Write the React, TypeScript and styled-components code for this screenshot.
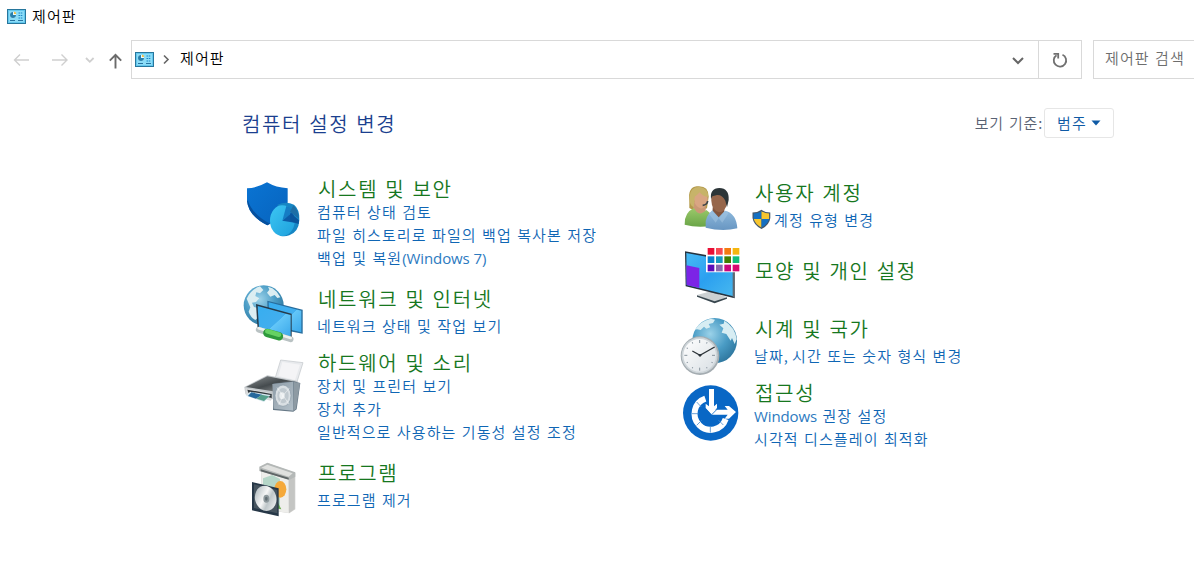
import React from "react";
import styled, { createGlobalStyle } from "styled-components";

const GlobalStyle = createGlobalStyle`
  * { box-sizing: border-box; }
  html, body { margin: 0; padding: 0; background: #fff; overflow: hidden; }
  body { font-family: "Noto Sans CJK KR", "Noto Sans", sans-serif; }
`;

const Window = styled.div`
  width: 1194px;
  height: 583px;
  overflow: hidden;
  background: #fff;
  font-size: 15px;
  font-weight: 350;
  letter-spacing: 1.1px;
  word-spacing: 0.9px;
  white-space: nowrap;
`;

const TitleBar = styled.header`
  display: flex;
  align-items: center;
  gap: 6px;
  height: 32px;
  padding-left: 7px;
  color: #000;
`;

const TitleText = styled.span`
  padding-bottom: 2px;
`;

const NavRow = styled.nav`
  display: flex;
  align-items: stretch;
  height: 39px;
  margin-top: 8px;
`;

const NavButtons = styled.div`
  width: 131px;
  height: 39px;
  flex: none;
`;

const AddressBar = styled.div`
  display: flex;
  flex: none;
  width: 951px;
  border: 1px solid #d9d9d9;
`;

const AddressPath = styled.div`
  display: flex;
  align-items: center;
  flex: 1;
  padding: 0 11px 0 3px;
  color: #000;
`;

const Crumb = styled.span`
  flex: 1;
  margin-left: 9px;
  padding-bottom: 4px;
`;

const RefreshButton = styled.div`
  display: flex;
  align-items: center;
  justify-content: center;
  width: 43px;
  border-left: 1px solid #d9d9d9;
`;

const SearchBox = styled.div`
  display: flex;
  align-items: center;
  flex: none;
  width: 110px;
  margin-left: 11px;
  padding: 0 0 4px 11px;
  border: 1px solid #d9d9d9;
  color: #6d6d6d;
`;

const HeadingRow = styled.div`
  display: flex;
  align-items: center;
  height: 30px;
  margin-top: 29px;
  padding: 0 80px 0 242px;
`;

const Heading = styled.h1`
  flex: 1;
  margin: 0;
  padding-top: 1px;
  color: #1b3f8f;
  font-size: 20px;
  font-weight: 350;
  letter-spacing: 1.65px;
  line-height: 30px;
`;

const ViewLabel = styled.span`
  margin-right: 1px;
  padding-bottom: 2px;
  color: #596273;
  letter-spacing: 0.8px;
`;

const ViewSelect = styled.div`
  display: flex;
  align-items: center;
  gap: 4px;
  width: 70px;
  height: 30px;
  padding: 0 0 1px 12px;
  border: 1px solid #e6e6e6;
  border-radius: 3px;
  color: #0f5aa5;
  line-height: 26px;
`;

const Columns = styled.main`
  display: grid;
  grid-template-columns: 440px 500px;
  margin-top: 39px;
  padding-left: 236px;
`;

const Column = styled.div<{ $top: number }>`
  display: flex;
  flex-direction: column;
  padding-top: ${(p) => p.$top}px;
`;

const Category = styled.section<{ $height: number }>`
  display: flex;
  align-items: flex-start;
  height: ${(p) => p.$height}px;
`;

const IconSlot = styled.div<{ $shift: number; $width: number }>`
  flex: none;
  width: ${(p) => p.$width}px;
  height: 0;
  margin-top: ${(p) => p.$shift}px;
  svg { display: block; }
`;

const CategoryTitle = styled.h2<{ $gap: number }>`
  margin: 0 0 ${(p) => p.$gap - 1}px 1px;
  color: #16771e;
  font-size: 20px;
  font-weight: 350;
  letter-spacing: 1.7px;
  line-height: 24px;
`;

const TaskLink = styled.a<{ $pull?: boolean }>`
  display: flex;
  align-items: center;
  height: 23px;
  margin-left: ${(p) => (p.$pull ? -3 : 0)}px;
  color: #0f66b4;
  line-height: 23px;
  white-space: pre;
`;

const LinkText = styled.span<{ $guarded?: boolean }>`
  margin-left: ${(p) => (p.$guarded ? 1 : 0)}px;
`;

const Latin = styled.span`
  font-family: "Open Sans", "Noto Sans", sans-serif;
  font-size: 15px;
  font-weight: 400;
  letter-spacing: -0.1px;
  word-spacing: 0;
  color: #2c7abf;
`;

const Comma = styled.span`
  letter-spacing: -1.2px;
`;

const PanelGlyph = () => (
  <svg width="19" height="15" viewBox="0 0 19 15">
    <rect x="0.5" y="0.5" width="18" height="14" fill="#63c7ee" stroke="#27769c" />
    <rect x="2" y="2" width="15" height="11" fill="#8bdcf7" />
    <circle cx="6" cy="6" r="3" fill="#e8f8ff" />
    <path d="M6 6V3a3 3 0 1 0 3 3z" fill="#2780ad" />
    <path d="M7 5V2.6A3 3 0 0 1 9.3 5z" fill="#f2c14b" />
    <path d="M11.5 4h4.5M11.5 6.5h4.5M11.5 9h4.5" stroke="#1d86c5" strokeWidth="1.2" strokeDasharray="1.5 .7" />
    <path d="M3 11.5h5M11 11.5h5" stroke="#2673a0" />
  </svg>
);

const NavArrows = () => (
  <svg width="131" height="39" viewBox="0 0 131 39" fill="none">
    <g stroke="#cfcfcf" strokeWidth="1.4">
      <path d="M29 20H14.5M20 14.5 14.5 20l5.500 5.500" />
      <path d="M52 20h15M61.500 14.500 67 20l-5.500 5.500" />
      <path d="m86 18 3.800 3.800L93.600 18" strokeWidth="1.8" />
    </g>
    <path d="M115.500 28.500V15M109.800 20.700l5.700-5.900 5.700 5.900" stroke="#6b6b6b" strokeWidth="1.900" />
  </svg>
);

const SecurityIcon = () => (
  <svg width="80" height="75" viewBox="0 0 240 225">
    <defs>
      <linearGradient id="shieldFill" x2="1" y2="1">
        <stop stopColor="#0a74d3" /><stop offset="1" stopColor="#0763bd" />
      </linearGradient>
      <linearGradient id="discFill" x2="1" y2="1">
        <stop stopColor="#3cc6f3" /><stop offset="1" stopColor="#1ea0dc" />
      </linearGradient>
    </defs>
    <path d="M33 49Q66 47 93 31Q120 47 155 49V91Q152 134 94 160Q36 130 33 86z" fill="url(#shieldFill)" />
    <path d="M33 86Q38 132 94 160L102 155Q48 126 36 86z" fill="#06509e" />
    <path d="M125 98Q150 86 174 98Q192 112 190 145Q188 180 160 190Q145 195 132 191z" fill="#1686c4" />
    <ellipse cx="139" cy="146" rx="37" ry="46" fill="url(#discFill)" />
    <path d="M139 146 151 102Q163 104 169 120z" fill="#157dc4" />
    <path d="m139 146 30-26q9 15 7 32z" fill="#0c5ca8" />
    <path d="m162 119 10-19q15 14 17 40z" fill="#1d6ea5" />
    <path d="m163 122 26 23-1 11-25-8z" fill="#0a559c" />
  </svg>
);

const GlobeDefs = ({ id }: { id: string }) => (
  <defs>
    <radialGradient id={id} cx=".4" cy=".35" r=".7">
      <stop stopColor="#9bd2e9" /><stop offset=".55" stopColor="#4a9cc5" /><stop offset="1" stopColor="#2d759d" />
    </radialGradient>
  </defs>
);

const NetworkIcon = () => (
  <svg width="80" height="70" viewBox="0 0 240 210">
    <GlobeDefs id="netGlobe" />
    <defs>
      <linearGradient id="screenFill" x2="1" y2="1">
        <stop stopColor="#37aef0" /><stop offset=".55" stopColor="#42aeee" /><stop offset=".56" stopColor="#63c6f8" /><stop offset="1" stopColor="#3aa8ea" />
      </linearGradient>
    </defs>
    <circle cx="83" cy="82" r="60" fill="url(#netGlobe)" />
    <path d="M32 62Q45 34 72 25L82 36 72 46 61 43 58 54 70 61 60 72 48 74 54 87 70 91 68 117 58 126Q43 117 38 101L43 88z" fill="#dceef2" />
    <path d="m96 26 13 5 13 10 11 17-9 2-8-9-13 5-10-12 7-9z" fill="#dceef2" />
    <path d="m94 68 106 27v72l-104-20z" fill="#276d9d" />
    <path d="m98 73 98 25v65l-96-23z" fill="url(#screenFill)" />
    <path d="m60 78 107 29v74L65 155z" fill="#263b4a" />
    <path d="m65 84 99 27v65l-95-25z" fill="url(#screenFill)" />
    <path d="m68 155 96 29" stroke="#b9c2c3" strokeWidth="17" strokeLinecap="round" />
    <path d="m68 151 96 29" stroke="#eef1ed" strokeWidth="8" strokeLinecap="round" />
    <path d="m94 165 35 10" stroke="#2e9a3b" strokeWidth="25" strokeLinecap="round" />
    <path d="m94 160 35 10" stroke="#66d162" strokeWidth="14" strokeLinecap="round" />
  </svg>
);

const HardwareIcon = () => (
  <svg width="80" height="70" viewBox="0 0 240 210">
    <defs>
      <linearGradient id="printerTop" x2="1" y2="1">
        <stop stopColor="#8a8f91" /><stop offset=".5" stopColor="#454b4e" /><stop offset="1" stopColor="#a2a6a7" />
      </linearGradient>
      <linearGradient id="speakerBody" x2="1" y2="1">
        <stop stopColor="#8f9da8" /><stop offset="1" stopColor="#b2bfc8" />
      </linearGradient>
    </defs>
    <path d="m134 30 67 8-20 64-64-16z" fill="#e8eaed" stroke="#c0c4c8" strokeWidth="2" />
    <path d="m139 36 53 8-15 46-50-12z" fill="#f4f4f6" />
    <path d="m25 111 69-35 91 17-13 39-70 17-74-18z" fill="#c2c7ca" />
    <path d="m30 111 64-32 87 17-61 29z" fill="url(#printerTop)" />
    <path d="m28 114 77 15v23l-76-18z" fill="#d8dadb" />
    <path d="m34 119 73 13v12l-70-16z" fill="#30373b" />
    <path d="m42 125 62 10-20 21-54-19z" fill="#d5e6ee" />
    <path d="m46 127 32 7-18 12-24-8z" fill="#26699c" />
    <path d="m76 134 24 5-16 14-22-7z" fill="#559f8b" />
    <path d="m112 101 60-7 21 5-11 79-10 7-61-5z" fill="#667886" />
    <path d="m109 102 63-7v87l-59-6z" fill="url(#speakerBody)" />
    <path d="m174 96 18 4-12 77-8 5z" fill="#8d9aa3" />
    <ellipse cx="141" cy="137" rx="24" ry="32" fill="#d9dfe3" stroke="#8a9aa6" strokeWidth="2" />
    <ellipse cx="141" cy="137" rx="17" ry="23" fill="#c0c9cf" />
    <ellipse cx="138" cy="137" rx="8" ry="10" fill="#e9edef" />
    <path d="m123 113 18 24 19-23M128 165l13-28 18 25" fill="none" stroke="#fff" strokeWidth="2" opacity=".7" />
  </svg>
);

const ProgramIcon = () => (
  <svg width="80" height="65" viewBox="0 0 240 195">
    <defs>
      <linearGradient id="cdFill" x2="1" y2="1">
        <stop stopColor="#9eabb0" /><stop offset=".45" stopColor="#f7f7f7" /><stop offset=".62" stopColor="#bec6c9" /><stop offset="1" stopColor="#fff" />
      </linearGradient>
    </defs>
    <path d="m75 32 20-11 83 30v109l-18 12-85-13z" fill="#d3d3d1" />
    <path d="m76 43 82 25v103l-82-13z" fill="#eeeeeb" />
    <path d="m158 68 18-8v99l-17 12z" fill="#c4c5c3" />
    <path d="m70 32 24-12 84 29v13l-17 9-91-26z" fill="#b4b8b7" />
    <path d="m76 35 18-9 76 26-12 10z" fill="#e0e1df" />
    <path d="m74 40 84 25v6L74 46z" fill="#5f6667" />
    <path d="m81 67 28-10 23 12v83l-51-8z" fill="#b5d6c8" />
    <ellipse cx="133" cy="100" rx="18" ry="25" fill="#f5a93a" />
    <path d="m118 126 18 34-20-3z" fill="#69ac4e" />
    <path d="m48 78 80 19v84l-80-18z" fill="#263747" />
    <path d="m54 85 70 17v70l-70-16z" fill="#46545f" />
    <ellipse cx="89" cy="127" rx="32" ry="38" transform="rotate(-15 89 127)" fill="url(#cdFill)" />
    <ellipse cx="91" cy="128" rx="9" ry="12" fill="#8d989c" />
    <ellipse cx="91" cy="128" rx="4" ry="6" fill="#626e74" />
  </svg>
);

const UsersIcon = () => (
  <svg width="80" height="60" viewBox="0 0 240 180">
    <defs>
      <linearGradient id="greenShirt" x2="0" y2="1">
        <stop stopColor="#9bc96a" /><stop offset="1" stopColor="#6aa548" />
      </linearGradient>
      <linearGradient id="blueShirt" x2="0" y2="1">
        <stop stopColor="#8eb9dc" /><stop offset="1" stopColor="#6896c2" />
      </linearGradient>
    </defs>
    <path d="M40 67Q35 29 62 25Q98 21 98 56L93 91Q58 105 40 90z" fill="#b3994a" />
    <path d="M53 72h36v27l-11 16-27-12z" fill="#cb9876" />
    <path d="M26 140Q24 104 54 90Q67 119 91 96L110 112V143Q64 151 26 140z" fill="url(#greenShirt)" />
    <path d="M54 48Q62 38 77 38Q96 42 95 67Q90 94 73 91Q56 84 54 65z" fill="#d9a583" />
    <path d="M40 56Q44 25 71 27Q97 30 97 57Q80 55 71 43Q63 52 56 56L54 88Q40 84 40 56z" fill="#c7b369" />
    <path d="M80 82Q94 80 95 69" fill="none" stroke="#3e4548" strokeWidth="5" />
    <path d="M111 79h34v28l-12 15-24-18z" fill="#82553e" />
    <path d="M89 140Q87 116 109 97L128 118L147 98Q181 106 184 151Q139 162 89 149z" fill="url(#blueShirt)" />
    <path d="m108 98 20 22-9 14-20-26zM147 98l-19 23 11 13 19-29z" fill="#a5c8e4" opacity=".5" />
    <path d="M106 48Q125 31 151 49L154 74Q147 103 129 103Q107 95 106 68z" fill="#96664b" />
    <path d="M105 63Q101 31 130 30Q160 31 158 66L153 88L148 68Q139 50 123 51L109 55z" fill="#2c3538" />
  </svg>
);

const AppearanceIcon = () => {
  const colors = ["#e90f36", "#f74752", "#f47b10", "#f5b60f", "#087fd0", "#1499bd", "#428000", "#12bc78", "#5c0db9", "#8b68ad", "#cb087d", "#d60970"];
  return (
    <svg width="80" height="70" viewBox="0 0 240 210">
      <defs>
        <linearGradient id="displayFill" x2="1" y2="1">
          <stop stopColor="#47baf5" /><stop offset=".5" stopColor="#2ba0f0" /><stop offset="1" stopColor="#48b8ef" />
        </linearGradient>
      </defs>
      <path d="m101 147 27 7-1 22-26-7z" fill="#8b999f" />
      <path d="m63 165 36-10 54 16-37 16z" fill="#cbd0d2" />
      <path d="m63 166 53 18 37-12v4l-37 14-53-20z" fill="#38464e" />
      <path d="m27 34 149 26v115L29 139z" fill="#25323e" />
      <path d="m31 39 141 26v104L32 135z" fill="url(#displayFill)" />
      <path d="m31 76 39 8v60l-38-9z" fill="#7c24e6" />
      <path d="m170 65 4 1v107l-4-1z" fill="#5f6870" />
      <path d="M90 19h101v78H90z" fill="#fff" />
      {colors.map((color, i) => (
        <rect key={i} x={95 + (i % 4) * 25} y={24 + Math.floor(i / 4) * 25} width="20" height="20" fill={color} />
      ))}
    </svg>
  );
};

const ClockIcon = () => (
  <svg width="80" height="66" viewBox="0 0 240 198">
    <GlobeDefs id="clockGlobe" />
    <defs>
      <linearGradient id="clockFace" x2="1" y2="1">
        <stop stopColor="#fff" /><stop offset="1" stopColor="#d9dfe4" />
      </linearGradient>
    </defs>
    <ellipse cx="116" cy="86" rx="67" ry="68" fill="url(#clockGlobe)" />
    <path d="M57 53Q72 28 104 20L117 23 111 33 98 36 103 46 91 50 84 44 74 54 63 52zM145 26Q178 46 182 82L176 96 168 78 164 86 151 66 137 62 142 49 130 38 143 35z" fill="#d7edf3" />
    <circle cx="72" cy="131" r="58" fill="#a4acb1" />
    <circle cx="71" cy="130" r="54" fill="#cdd4d8" />
    <circle cx="71" cy="130" r="49" fill="url(#clockFace)" />
    <g stroke="#87939d" strokeWidth="3">
      {Array.from({ length: 12 }, (_, i) => (
        <path key={i} d={i % 3 === 0 ? "M71 84v9" : "M71 85v4"} transform={`rotate(${i * 30} 71 130)`} />
      ))}
    </g>
    <path d="m49 117 23 13 44-25" fill="none" stroke="#2d3439" strokeWidth="4" />
    <circle cx="72" cy="130" r="4" fill="#293137" />
  </svg>
);

const AccessIcon = () => (
  <svg width="80" height="68" viewBox="0 0 240 204">
    <circle cx="104" cy="105" r="83" fill="#0967c5" />
    <path d="M88 62A48 48 0 1 0 149 123" fill="none" stroke="#fff" strokeWidth="18" />
    <g stroke="#4f8fce" strokeWidth="2.5">
      <path d="m62 72 14 15M47 107h20M62 142l15-15M103 144v20M142 141l-14-14" />
    </g>
    <path d="M99 33h15v52l9-8v13l-17 19-17-19V77l10 8z" fill="#fff" />
    <path d="M112 95h43l-9-11h13l21 18-21 20h-13l9-12h-50z" fill="#fff" />
    <path d="m90 94 16 17 17-17" fill="none" stroke="#0967c5" strokeWidth="2.5" />
  </svg>
);

const UacShield = () => (
  <svg width="22" height="21" viewBox="0 0 22 21">
    <path d="M10.500.8Q14 3.500 19.300 3.500V9Q18.500 16 10.500 20Q2.500 16 1.500 9V3.500Q7 3.500 10.500.8z" fill="#44576c" />
    <path d="M10.500 2.200V10H2.700V4.600Q7 4.500 10.500 2.200z" fill="#1570c2" />
    <path d="M10.500 2.200Q14 4.500 18.100 4.600V10h-7.600z" fill="#f8c62e" />
    <path d="M2.800 10h7.700v8.600Q4 15 2.800 10z" fill="#f8c62e" />
    <path d="M10.500 10h7.600q-1 5-7.600 8.600z" fill="#1570c2" />
  </svg>
);

type Item = {
  title: string;
  height: number;
  shift: number;
  gap?: number;
  icon: React.ReactNode;
  links: React.ReactNode[];
  guarded?: boolean;
};

const leftItems: Item[] = [
  { title: "시스템 및 보안", height: 110, shift: -5, icon: <SecurityIcon />, links: ["컴퓨터 상태 검토", "파일 히스토리로 파일의 백업 복사본 저장", <>백업 및 복원<Latin>(Windows 7)</Latin></>] },
  { title: "네트워크 및 인터넷", height: 64, shift: -9, gap: 4, icon: <NetworkIcon />, links: ["네트워크 상태 및 작업 보기"] },
  { title: "하드웨어 및 소리", height: 110, shift: -1, icon: <HardwareIcon />, links: ["장치 및 프린터 보기", "장치 추가", "일반적으로 사용하는 기동성 설정 조정"] },
  { title: "프로그램", height: 60, shift: -5, gap: 4, icon: <ProgramIcon />, links: ["프로그램 제거"] },
];

const rightItems: Item[] = [
  { title: "사용자 계정", height: 78, shift: -3, gap: 4, icon: <UsersIcon />, links: ["계정 유형 변경"], guarded: true },
  { title: "모양 및 개인 설정", height: 58, shift: -19, icon: <AppearanceIcon />, links: [] },
  { title: "시계 및 국가", height: 64, shift: -5, gap: 4, icon: <ClockIcon />, links: [<>날짜<Comma>,</Comma> 시간 또는 숫자 형식 변경</>] },
  { title: "접근성", height: 70, shift: -3, icon: <AccessIcon />, links: [<><Latin>Windows</Latin> 권장 설정</>, "시각적 디스플레이 최적화"] },
];

const CategoryList = ({ items, top, slot }: { items: Item[]; top: number; slot: number }) => (
  <Column $top={top}>
    {items.map((item) => (
      <Category key={item.title} $height={item.height}>
        <IconSlot $shift={item.shift} $width={slot}>{item.icon}</IconSlot>
        <div>
          <CategoryTitle $gap={item.gap ?? 0}>{item.title}</CategoryTitle>
          {item.links.map((link, i) => (
            <TaskLink key={i} $pull={item.guarded}>
              {item.guarded && <UacShield />}
              <LinkText $guarded={item.guarded}>{link}</LinkText>
            </TaskLink>
          ))}
        </div>
      </Category>
    ))}
  </Column>
);

export default function App() {
  return (
    <Window>
      <GlobalStyle />
      <TitleBar>
        <PanelGlyph />
        <TitleText>제어판</TitleText>
      </TitleBar>
      <NavRow>
        <NavButtons><NavArrows /></NavButtons>
        <AddressBar>
          <AddressPath>
            <PanelGlyph />
            <svg width="17" height="12" viewBox="0 0 17 12" fill="none">
              <path d="m10 1.500 4 4-4 4" stroke="#666" strokeWidth="1.600" />
            </svg>
            <Crumb>제어판</Crumb>
            <svg width="18" height="14" viewBox="0 0 18 14" fill="none">
              <path d="m4 5 5 5 5-5" stroke="#666" strokeWidth="2" />
            </svg>
          </AddressPath>
          <RefreshButton>
            <svg width="18" height="18" viewBox="0 0 18 18" fill="none" stroke="#707070" strokeWidth="1.800">
              <path d="M11.500 3.700A6.200 6.200 0 1 1 5.500 4.200" />
              <path d="M2.500 2.900h4.700v4.700" />
            </svg>
          </RefreshButton>
        </AddressBar>
        <SearchBox>제어판 검색</SearchBox>
      </NavRow>
      <HeadingRow>
        <Heading>컴퓨터 설정 변경</Heading>
        <ViewLabel>보기 기준:</ViewLabel>
        <ViewSelect>
          범주
          <svg width="10" height="6" viewBox="0 0 10 6"><path d="M.5.500h9L5 5.500z" fill="#0f5aa5" /></svg>
        </ViewSelect>
      </HeadingRow>
      <Columns>
        <CategoryList items={leftItems} top={0} slot={81} />
        <CategoryList items={rightItems} top={4} slot={78} />
      </Columns>
    </Window>
  );
}
